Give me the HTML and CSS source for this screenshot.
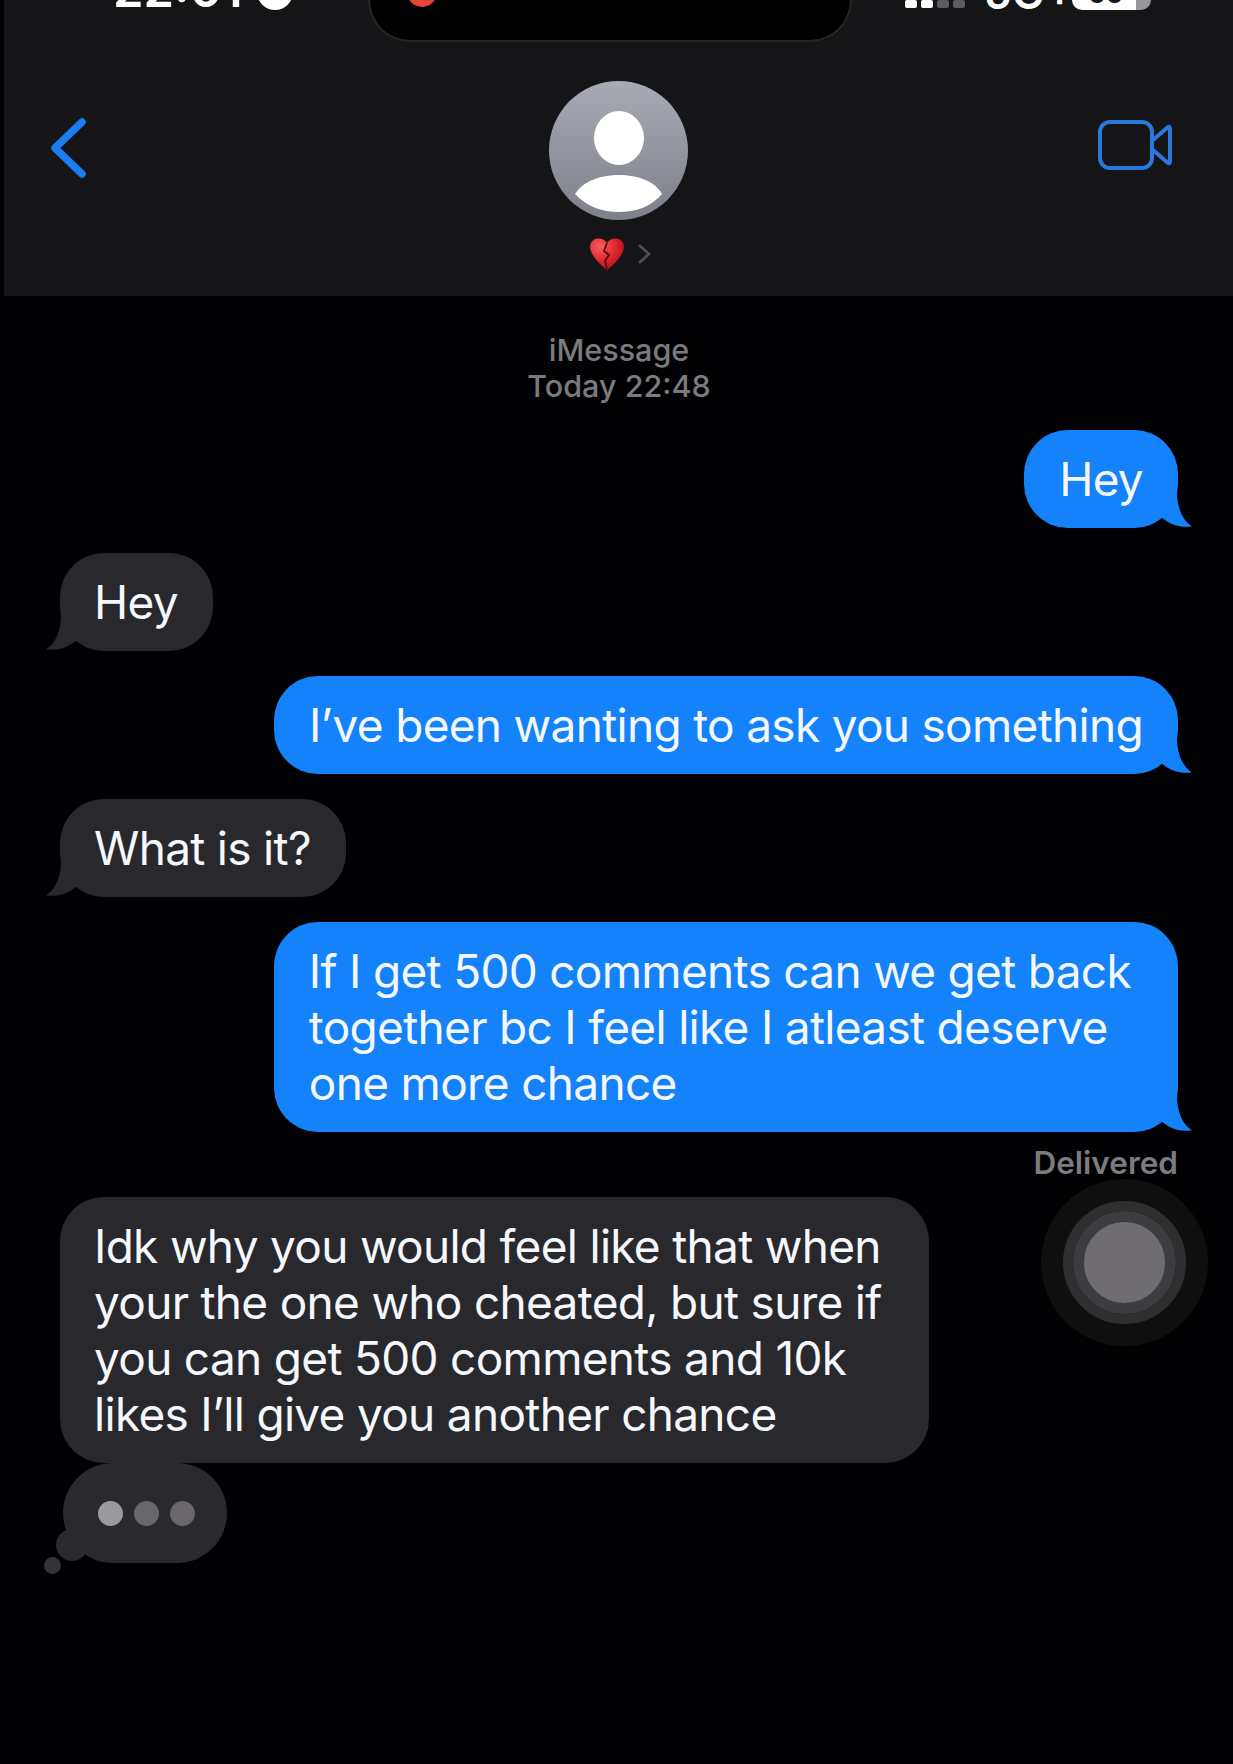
FILE: index.html
```html
<!DOCTYPE html>
<html lang="en">
<head>
  <meta charset="UTF-8" />
  <meta name="viewport" content="width=device-width, initial-scale=1.0" />
  <title>Messages</title>
  <link rel="stylesheet" href="styles.css">
</head>
<body>
  <header class="header">
    <div class="status">
      <div class="status-left">
        <span class="clock">22:01</span>
        <span class="rec-dot"></span>
      </div>
      <div class="notch"><span class="notch-dot"></span></div>
      <div class="status-right">
        <span class="signal"><i></i><i></i><i class="dim"></i><i class="dim"></i></span>
        <span class="net">5G+</span>
        <span class="battery"><b>66</b></span>
      </div>
    </div>

    <div class="nav">
      <svg class="back" width="40" height="64" viewBox="0 0 40 64">
        <path d="M33 7 L6 33 L33 59" fill="none" stroke="#1a7df0" stroke-width="7.5" stroke-linecap="round" stroke-linejoin="round" />
      </svg>

      <div class="contact">
        <svg class="avatar" width="139" height="139" viewBox="0 0 139 139">
          <defs>
            <linearGradient id="avatarBg" x1="0" y1="0" x2="0" y2="1">
              <stop offset="0" stop-color="#a8abb4" />
              <stop offset="1" stop-color="#7d8089" />
            </linearGradient>
          </defs>
          <circle cx="69.5" cy="69.5" r="69.5" fill="url(#avatarBg)" />
          <ellipse cx="70" cy="57" rx="25" ry="27" fill="#fff" />
          <path d="M26 113 C34 100 52 94 70 94 C88 94 106 100 113 113 C102 126 86 131 70 131 C54 131 38 126 26 113Z" fill="#fff" />
        </svg>
        <div class="contact-name">
          <svg class="heart" width="36" height="34" viewBox="0 0 36 34">
            <defs>
              <radialGradient id="heartFill" cx="0.3" cy="0.25" r="0.85">
                <stop offset="0" stop-color="#f4605f" />
                <stop offset="0.5" stop-color="#e42a2e" />
                <stop offset="1" stop-color="#a50c14" />
              </radialGradient>
            </defs>
            <path d="M18 6 C14 0 4 0 1.5 7 C-1 15 8 25 18 33 C28 25 37 15 34.5 7 C32 0 22 0 18 6Z" fill="url(#heartFill)" />
            <path d="M18 6 L15 14 L20 18 L16 24 L18 32" fill="none" stroke="#5e0a0f" stroke-width="1.8" />
          </svg>
          <svg class="more" width="14" height="22" viewBox="0 0 14 22">
            <path d="M2 2 L12 11 L2 20" fill="none" stroke="#4f4f53" stroke-width="2.8" />
          </svg>
        </div>
      </div>

      <svg class="video" width="76" height="52" viewBox="0 0 76 52">
        <rect x="3" y="3" width="52" height="46" rx="10" fill="none" stroke="#2a78dc" stroke-width="4" />
        <path d="M56 21 L71 8 Q73 7 73 10 L73 42 Q73 45 71 44 L56 31" fill="none" stroke="#2a78dc" stroke-width="4" stroke-linejoin="round" />
      </svg>
    </div>
  </header>

  <main class="thread">
    <p class="stamp">iMessage<br>Today 22:48</p>

    <div class="bubble sent">Hey</div>
    <div class="bubble received">Hey</div>
    <div class="bubble sent">I’ve been wanting to ask you something</div>
    <div class="bubble received">What is it?</div>
    <div class="bubble sent wide">If I get 500 comments can we get back<br>together bc I feel like I atleast deserve<br>one more chance</div>
    <div class="delivered">Delivered</div>
    <div class="bubble received wide no-tail">Idk why you would feel like that when<br>your the one who cheated, but sure if<br>you can get 500 comments and 10k<br>likes I’ll give you another chance</div>

    <div class="typing">
      <span class="dot on"></span>
      <span class="dot"></span>
      <span class="dot"></span>
    </div>

    <div class="assistive"><span></span></div>
  </main>
</body>
</html>
```

FILE: styles.css
```css
html, body {
  margin: 0;
  height: 1764px;
  overflow: hidden;
}

body {
  background: #010103;
  color: #fff;
  font-family: Inter, "Liberation Sans", sans-serif;
  position: relative;
}

.header {
  height: 296px;
  margin-left: 4px;
  background: #151517;
  box-sizing: border-box;
}

/* status bar, mostly cut off by the top of the picture */
.status {
  height: 42px;
  display: flex;
}

.status-left {
  display: flex;
  align-items: flex-end;
  gap: 14px;
  width: 255px;
  height: 10px;
  margin-left: 109px;
}

.clock {
  font-size: 49px;
  font-weight: 600;
  line-height: 40px;
}

.rec-dot {
  width: 36px;
  height: 36px;
  border-radius: 50%;
  background: #fff;
}

.notch {
  width: 484px;
  height: 42px;
  box-sizing: border-box;
  background: #000;
  border: 2px solid #262628;
  border-top: none;
  border-radius: 0 0 44px 44px;
  display: flex;
  align-items: flex-end;
  padding: 0 0 33px 37px;
}

.notch-dot {
  width: 30px;
  height: 30px;
  border-radius: 50%;
  background: #e8423c;
}

.status-right {
  display: flex;
  align-items: flex-end;
  height: 10px;
  margin-left: auto;
  margin-right: 82px;
}

.signal {
  display: flex;
  gap: 4px;
  height: 8px;
  margin-bottom: 2px;
}

.signal i {
  width: 12px;
  background: #fff;
  border-radius: 2px;
}

.signal i.dim {
  background: #5c5c60;
}

.net {
  font-size: 44px;
  font-weight: 600;
  line-height: 34px;
  margin-left: 19px;
  width: 63px;
  white-space: nowrap;
}

.battery {
  width: 79px;
  height: 30px;
  margin-left: 25px;
  box-sizing: border-box;
  padding-bottom: 6px;
  overflow: hidden;
  border-radius: 0 0 10px 10px;
  background: linear-gradient(90deg, #fff 81%, #98969a 81%);
  color: #161618;
  display: flex;
  align-items: flex-end;
  justify-content: center;
}

.battery b {
  font-size: 27px;
  line-height: 20px;
  padding-right: 12px;
}

/* contact row */
.nav {
  display: grid;
  grid-template-columns: 1fr auto 1fr;
  padding: 0 60px 0 45px;
  margin-top: 39px;
}

.back {
  margin-top: 34px;
}

.video {
  margin-top: 38px;
  justify-self: end;
}

.contact {
  display: flex;
  flex-direction: column;
  align-items: center;
  margin-left: 13px;
  margin-right: -2px;
}

.avatar {
  display: block;
}

.contact-name {
  display: flex;
  align-items: center;
  gap: 12px;
  margin-top: 17px;
  margin-left: 2px;
}

/* messages */
.thread {
  display: flex;
  flex-direction: column;
  gap: 25px;
  padding: 36px 55px 0 60px;
}

.stamp {
  margin: 0 0 1px;
  align-self: center;
  text-align: center;
  font-size: 30.5px;
  line-height: 36px;
  font-weight: 500;
  color: #7b7b7f;
}

.bubble {
  position: relative;
  padding: 21px 35px;
  font-size: 46px;
  line-height: 56px;
  border-radius: 44px;
  letter-spacing: -0.7px;
  white-space: nowrap;
  color: #f4f7fb;
}

.wide {
  padding-right: 47px;
}

.bubble::after {
  content: "";
  position: absolute;
  bottom: 0;
  width: 48px;
  height: 41px;
  background: inherit;
  clip-path: path("M0 0H32V5C32 20 37 33 47 39.5C36 41 25 38 16 30L0 30Z");
}

.bubble.no-tail::after {
  display: none;
}

.sent {
  align-self: flex-end;
  background: #1382fb;
}

.sent::after {
  right: -15px;
}

.received {
  align-self: flex-start;
  padding-left: 34px;
  background: #29292d;
}

.received::after {
  left: -15px;
  transform: scaleX(-1);
}

.delivered {
  align-self: flex-end;
  margin: -11px 0 -8px;
  font-size: 31.5px;
  line-height: 34px;
  font-weight: 600;
  color: #7b7b80;
}

.typing {
  position: relative;
  align-self: flex-start;
  width: 164px;
  height: 100px;
  margin: -25px 0 0 3px;
  box-sizing: border-box;
  padding-left: 35px;
  border-radius: 50px;
  background: #2a292d;
  display: flex;
  align-items: center;
  gap: 11px;
}

.typing::before,
.typing::after {
  content: "";
  position: absolute;
  border-radius: 50%;
  background: #2a292d;
}

.typing::before {
  left: -7px;
  bottom: 2px;
  width: 32px;
  height: 32px;
}

.typing::after {
  left: -19px;
  bottom: -11px;
  width: 17px;
  height: 17px;
  background: #333336;
}

.dot {
  width: 25px;
  height: 25px;
  border-radius: 50%;
  background: #69676b;
}

.dot.on {
  background: #9b999d;
}

/* floating button sits over the thread */
.assistive {
  position: absolute;
  left: 1041px;
  top: 1179px;
  width: 167px;
  height: 167px;
  border-radius: 50%;
  background: #0f0f10;
  display: flex;
  align-items: center;
  justify-content: center;
}

.assistive span {
  width: 81px;
  height: 81px;
  border-radius: 50%;
  background: #6f6d70;
  border: 11px solid #3d3d3f;
  outline: 10px solid #2f2f31;
}
```
